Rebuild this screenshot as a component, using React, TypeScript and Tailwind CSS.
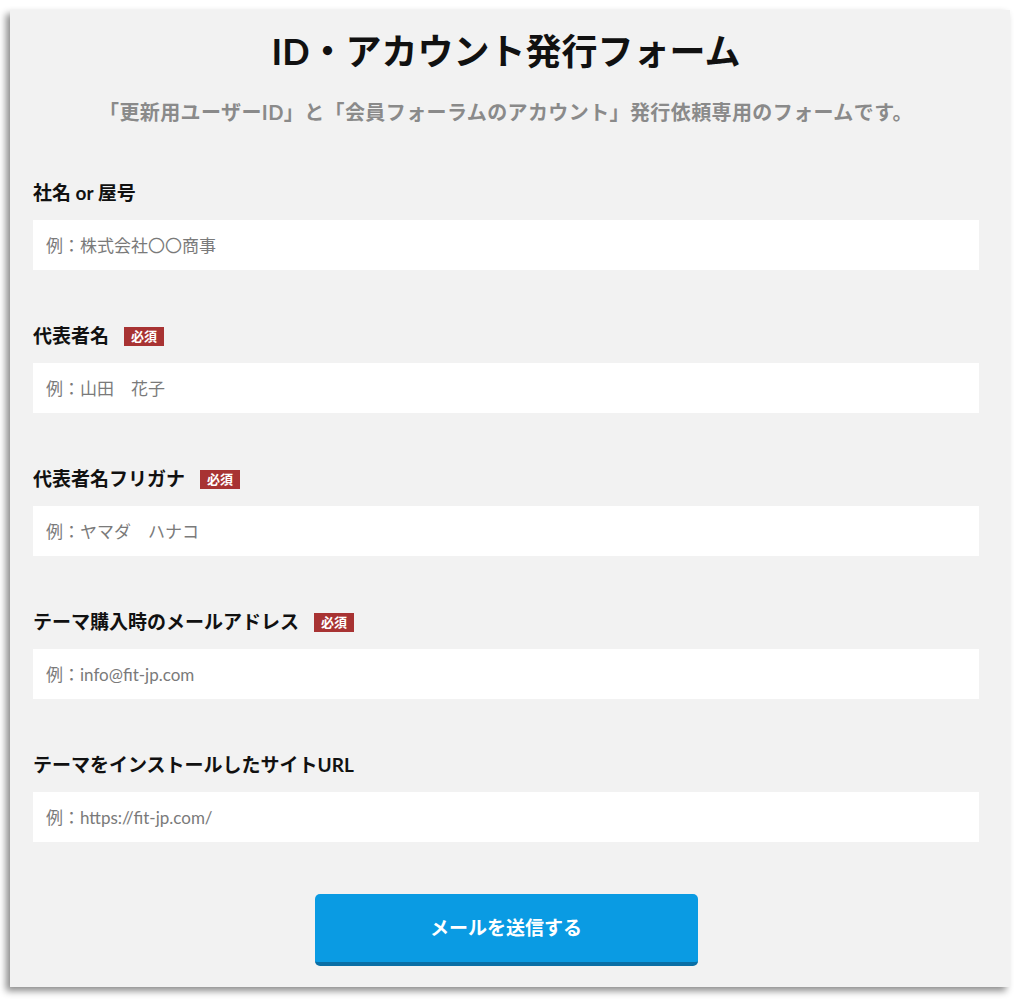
const FONT = "font-['Lato','Noto_Sans_CJK_JP',sans-serif]";

type Field = {
  label: string;
  placeholder: string;
  required?: boolean;
};

const fields: Field[] = [
  { label: '社名 or 屋号', placeholder: '例：株式会社〇〇商事' },
  { label: '代表者名', placeholder: '例：山田　花子', required: true },
  { label: '代表者名フリガナ', placeholder: '例：ヤマダ　ハナコ', required: true },
  { label: 'テーマ購入時のメールアドレス', placeholder: '例：info@fit-jp.com', required: true },
  { label: 'テーマをインストールしたサイトURL', placeholder: '例：https://fit-jp.com/' },
];

function FormField({ label, placeholder, required }: Field) {
  return (
    <div className="mb-[52px]">
      <div className="mb-[13px] flex h-[28px] items-center">
        <span className="text-[19px] font-bold leading-[28px] text-[#111]">{label}</span>
        {required && (
          <span className="ml-[15px] flex h-[19px] items-center bg-[#a83333] px-[7px] text-[13px] font-bold leading-none text-white">
            必須
          </span>
        )}
      </div>
      <input
        type="text"
        placeholder={placeholder}
        className={`${FONT} block h-[50px] w-full bg-white px-[13px] text-[17px] text-[#333] outline-none placeholder:text-[#7a7a7a]`}
      />
    </div>
  );
}

export default function App() {
  return (
    <div className={`${FONT} min-h-[1000px] bg-white pt-[10px]`}>
      <div className="ml-[10px] w-[1000px] bg-[#f2f2f2] pl-[23px] pr-[31px] pt-[16px] pb-[21px] shadow-[-4px_4px_7px_rgba(0,0,0,0.45)]">
        {/* Heading */}
        <h1 className="text-center text-[36px] font-bold leading-[50px] text-[#111]">
          ID・アカウント発行フォーム
        </h1>
        <p className="mt-[21px] text-center text-[20px] font-bold leading-[30px] tracking-[0.4px] text-[#8a8a8a]">
          「更新用ユーザーID」と「会員フォーラムのアカウント」発行依頼専用のフォームです。
        </p>

        <form className="mt-[52px]" onSubmit={(e) => e.preventDefault()}>
          {fields.map((f) => (
            <FormField key={f.label} {...f} />
          ))}

          <div className="mt-[1px] flex justify-center">
            <button
              type="submit"
              className="h-[72px] w-[383px] rounded-[5px] border-b-[4px] border-[#0a6fa6] bg-[#0a9be3] text-[19px] font-bold text-white"
            >
              メールを送信する
            </button>
          </div>
        </form>
      </div>
    </div>
  );
}
